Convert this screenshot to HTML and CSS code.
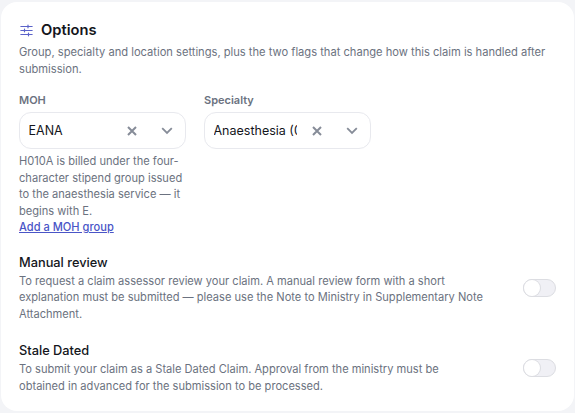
FILE: index.html
```html
<!DOCTYPE html>
<html lang="en">
<head>
    <meta charset="UTF-8">
    <title>Options</title>
    <link rel="stylesheet" href="styles.css">
</head>
<body>

    <section class="card">
        <h2 class="card-title">
            <svg class="title-icon" viewBox="0 0 13 13" fill="none" stroke="#5b63c9" stroke-width="1" stroke-linecap="round">
                <path d="M.8 2.5h11.4M.8 6.5h11.4M.8 10.5h11.4"/>
                <path d="M8 1.2v2.6M4.5 5.2v2.6M8.5 9.2v2.6" stroke-width="1.2"/>
            </svg>
            Options
        </h2>
        <p class="card-desc">Group, specialty and location settings, plus the two flags that change how this claim is handled after submission.</p>

        <div class="fields">
            <div class="field">
                <label class="field-label">MOH</label>
                <div class="select">
                    <span class="select-value">EANA</span>
                    <svg class="select-clear" viewBox="0 0 10 10"><path d="M1 1l8 8M9 1l-8 8"/></svg>
                    <svg class="select-arrow" viewBox="0 0 12 8"><path d="M1.2 1.2L6 6l4.8-4.8"/></svg>
                </div>
                <p class="field-help">H010A is billed under the four-character stipend group issued to the anaesthesia service — it begins with E.</p>
                <a class="field-link" href="#">Add a MOH group</a>
            </div>
            <div class="field">
                <label class="field-label">Specialty</label>
                <div class="select">
                    <span class="select-value">Anaesthesia (01)</span>
                    <svg class="select-clear" viewBox="0 0 10 10"><path d="M1 1l8 8M9 1l-8 8"/></svg>
                    <svg class="select-arrow" viewBox="0 0 12 8"><path d="M1.2 1.2L6 6l4.8-4.8"/></svg>
                </div>
            </div>
        </div>

        <div class="flag">
            <div class="flag-text">
                <h3 class="flag-title">Manual review</h3>
                <p class="flag-desc">To request a claim assessor review your claim. A manual review form with a short explanation must be submitted — please use the Note to Ministry in Supplementary Note Attachment.</p>
            </div>
            <span class="toggle"></span>
        </div>

        <div class="flag">
            <div class="flag-text">
                <h3 class="flag-title">Stale Dated</h3>
                <p class="flag-desc">To submit your claim as a Stale Dated Claim. Approval from the ministry must be obtained in advanced for the submission to be processed.</p>
            </div>
            <span class="toggle"></span>
        </div>
    </section>

</body>
</html>
```

FILE: styles.css
```css
body {
    margin: 0;
    padding: 2px 1px 2px 1px;
    background-color: #f3f4f7;
    font-family: Inter, "Liberation Sans", sans-serif;
    color: #14161c;
}
.card {
    background-color: #fff;
    border-radius: 16px;
    height: 409px;
    box-sizing: border-box;
    padding: 18px 18px 0 18px;
}
.card-title {
    display: flex;
    align-items: center;
    gap: 8px;
    margin: 0 0 0 1px;
    font-size: 14.7px;
    line-height: 20px;
    font-weight: 600;
}
.title-icon {
    width: 13px;
    height: 13px;
}
.card-desc {
    margin: 4px 0 0 0;
    font-size: 11.15px;
    line-height: 17px;
    color: #6b7280;
}
.fields {
    display: flex;
    gap: 18px;
    margin-top: 14px;
}
.field {
    width: 167px;
}
.field-label {
    display: block;
    font-size: 11px;
    line-height: 16px;
    font-weight: 600;
    color: #6b7280;
    margin-bottom: 4px;
}
.select {
    display: flex;
    align-items: center;
    height: 37px;
    box-sizing: border-box;
    padding: 0 12px 0 8.5px;
    border: 1px solid #e8e9ee;
    border-radius: 12px;
    background-color: #fff;
}
.select-value {
    flex: 1;
    min-width: 0;
    max-width: 83px;
    overflow: hidden;
    white-space: nowrap;
    font-size: 12.5px;
}
.select-clear {
    width: 10px;
    height: 10px;
    margin-left: auto;
    fill: none;
    stroke: #868c98;
    stroke-width: 2;
}
.select-arrow {
    width: 12px;
    height: 8px;
    margin-left: 24px;
    fill: none;
    stroke: #868c98;
    stroke-width: 1.8;
}
.field-help {
    margin: 4px 0 0 0;
    font-size: 11.1px;
    line-height: 16.5px;
    color: #6b7280;
}
.field-link {
    display: block;
    font-size: 11.1px;
    line-height: 16.5px;
    font-weight: 500;
    color: #4a55c7;
}
.flag {
    display: flex;
    align-items: center;
    justify-content: space-between;
    margin-top: 18px;
}
.flag + .flag {
    margin-top: 20px;
}
.flag-text {
    width: 468px;
}
.flag-title {
    margin: 0 0 1px 0;
    font-size: 12.8px;
    line-height: 18px;
    font-weight: 500;
}
.flag-desc {
    margin: 0;
    font-size: 11.1px;
    line-height: 16.5px;
    color: #6b7280;
}
.toggle {
    display: block;
    position: relative;
    width: 33px;
    height: 18px;
    box-sizing: border-box;
    border: 1px solid #dcdde2;
    border-radius: 9px;
    background-color: #f0f0f5;
}
.toggle::after {
    content: "";
    position: absolute;
    left: 0;
    top: 0;
    width: 16px;
    height: 16px;
    border-radius: 50%;
    background-color: #fff;
    box-shadow: 0 0 0 1px #dcdde2;
}
```
